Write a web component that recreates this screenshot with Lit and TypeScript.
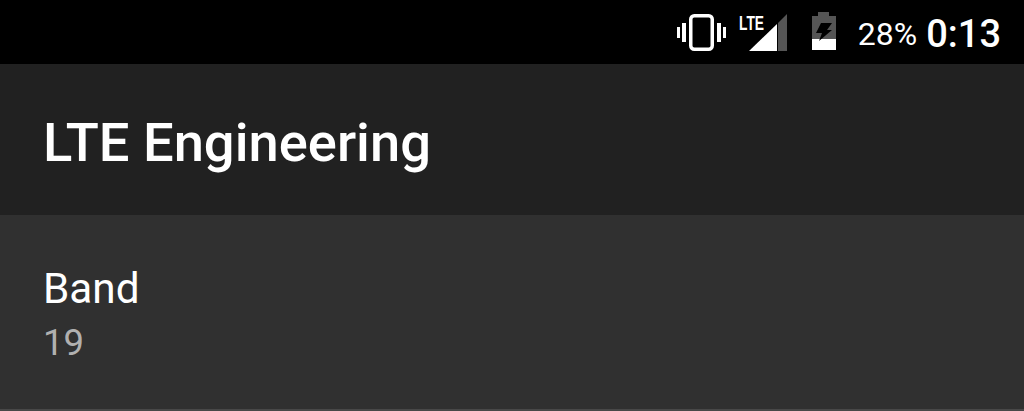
import { LitElement, css, html } from "lit";
import { customElement } from "lit/decorators.js";

@customElement("app-root")
export class AppRoot extends LitElement {
  static styles = css`
    :host {
      display: flex;
      flex-direction: column;
      width: 1024px;
      height: 411px;
      overflow: hidden;
      background: #303030;
      font-family: Roboto, "Liberation Sans", sans-serif;
    }

    .status {
      display: flex;
      align-items: center;
      justify-content: flex-end;
      flex: none;
      height: 64px;
      padding-right: 23px;
      background: #000;
      color: #fff;
    }

    .status svg {
      display: block;
      flex: none;
    }

    .vibrate {
      margin-right: 13px;
    }

    .signal {
      margin-right: 25px;
    }

    .battery {
      margin-right: 22px;
    }

    .percent {
      margin-top: 3px;
      margin-right: 9px;
      font-size: 32px;
      line-height: 38px;
    }

    .clock {
      margin-top: 4px;
      font-size: 38px;
      font-weight: 500;
      line-height: 44px;
    }

    .lte {
      font-family: "Liberation Sans", sans-serif;
      font-size: 21px;
      font-weight: 700;
    }

    .appbar {
      display: flex;
      align-items: center;
      flex: none;
      height: 151px;
      padding: 6px 0 0 43px;
      box-sizing: border-box;
      background: #212121;
      color: #fff;
      font-size: 54.3px;
      font-weight: 500;
    }

    .row {
      display: flex;
      flex: 1;
      flex-direction: column;
      padding: 48px 43px 0;
      border-bottom: 2px solid #484848;
    }

    .label {
      color: #fff;
      font-size: 42.3px;
      line-height: 52px;
    }

    .value {
      margin-top: 5px;
      color: #b0b0b0;
      font-size: 36.5px;
      line-height: 46px;
    }
  `;

  render() {
    return html`
      <div class="status">
        <svg class="vibrate" width="49" height="38" viewBox="0 0 49 38" fill="#fff">
          <rect x="0" y="14" width="3" height="11" />
          <rect x="5" y="10" width="4" height="19" />
          <rect x="13.750" y="2.750" width="21.500" height="33.500" rx="3.500" fill="none" stroke="#fff" stroke-width="3.500" />
          <rect x="40" y="10" width="4" height="19" />
          <rect x="46" y="14" width="3" height="11" />
        </svg>
        <svg class="signal" width="48" height="46" viewBox="0 -4 48 46">
          <text class="lte" x="0" y="17" fill="#fff" textLength="25" lengthAdjust="spacingAndGlyphs">LTE</text>
          <path d="M10 38 38 11V38Z" fill="#fff" />
          <path d="M39 10 48 1V38H39Z" fill="#555" />
        </svg>
        <svg class="battery" width="24" height="40" viewBox="0 0 24 40">
          <path d="M6 0H17V4H24V27H0V4H6Z" fill="#555" />
          <path d="M0 27H24V38H0Z" fill="#fff" />
          <path d="M9 11H20L15 18H20L7 29 10 21H4Z" fill="#000" />
        </svg>
        <span class="percent">28%</span>
        <span class="clock">0:13</span>
      </div>
      <div class="appbar">LTE Engineering</div>
      <div class="row">
        <span class="label">Band</span>
        <span class="value">19</span>
      </div>
    `;
  }
}
